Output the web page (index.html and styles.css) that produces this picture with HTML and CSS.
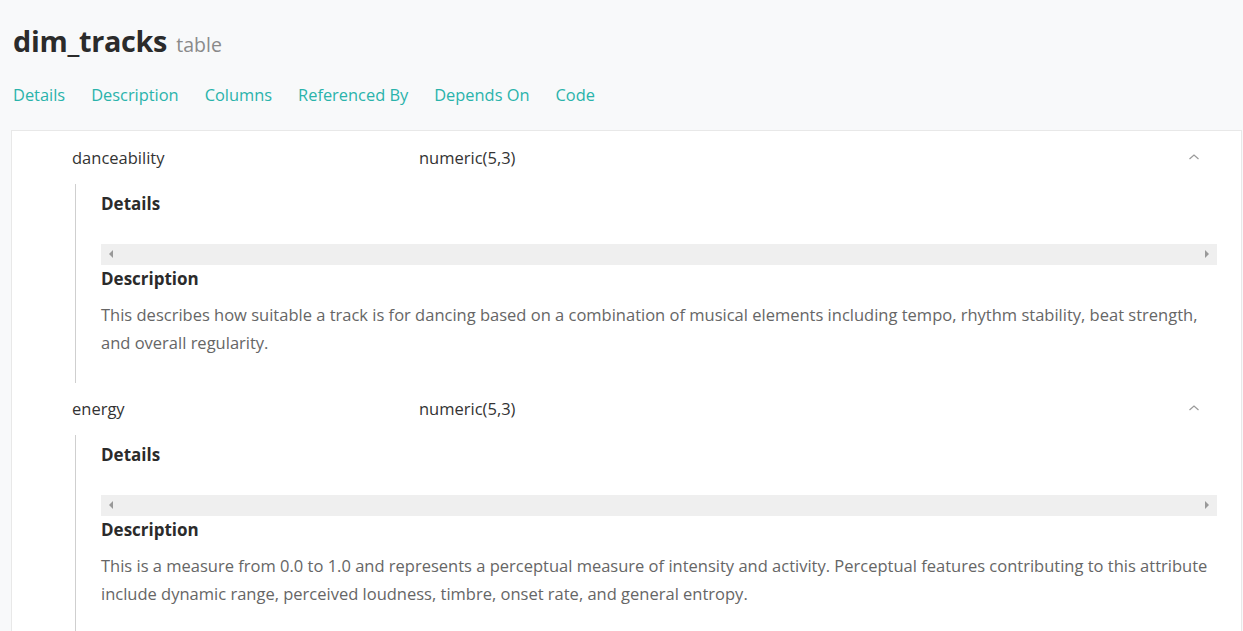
FILE: index.html
```html
<!DOCTYPE html>
<html>
<head>
<meta charset="utf-8">
<link rel="stylesheet" href="styles.css">
</head>
<body>
<div class="page">
  <h1 class="title">dim_tracks <span class="kind">table</span></h1>
  <nav class="tabs">
    <a>Details</a><a>Description</a><a>Columns</a><a>Referenced By</a><a>Depends On</a><a>Code</a>
  </nav>
  <div class="panel">
    <div class="col">
      <div class="col-head">
        <span class="col-name">danceability</span>
        <span class="col-type">numeric(5,3)</span>
        <svg class="chev" width="12" height="8" viewBox="0 0 12 8"><path d="M1.5 6 L6 2 L10.5 6" fill="none" stroke="#9a9a9a" stroke-width="1.2"/></svg>
      </div>
      <div class="col-body">
        <h3 class="sub">Details</h3>
        <div class="scroll"><span class="arr l"></span><span class="arr r"></span></div>
        <h3 class="sub">Description</h3>
        <p class="desc">This describes how suitable a track is for dancing based on a combination of musical elements including tempo, rhythm stability, beat strength, and overall regularity.</p>
      </div>
    </div>
    <div class="col">
      <div class="col-head">
        <span class="col-name">energy</span>
        <span class="col-type">numeric(5,3)</span>
        <svg class="chev" width="12" height="8" viewBox="0 0 12 8"><path d="M1.5 6 L6 2 L10.5 6" fill="none" stroke="#9a9a9a" stroke-width="1.2"/></svg>
      </div>
      <div class="col-body">
        <h3 class="sub">Details</h3>
        <div class="scroll"><span class="arr l"></span><span class="arr r"></span></div>
        <h3 class="sub">Description</h3>
        <p class="desc">This is a measure from 0.0 to 1.0 and represents a perceptual measure of intensity and activity. Perceptual features contributing to this attribute include dynamic range, perceived loudness, timbre, onset rate, and general entropy.</p>
      </div>
    </div>
  </div>
</div>
</body>
</html>
```
FILE: styles.css
```css
html, body { margin: 0; padding: 0; }
body {
  background: #f8f9fa;
  font-family: "Open Sans", "Noto Sans", sans-serif;
  color: #333;
  overflow: hidden;
}
.page { padding: 22px 0 0 11px; }
.title {
  margin: 0 0 0 2px;
  font-size: 28.8px;
  font-weight: 700;
  line-height: 38px;
  color: #2b2b2b;
  letter-spacing: -0.3px;
}
.kind { font-size: 19.5px; font-weight: 400; color: #8a8a8a; letter-spacing: 0; margin-left: 2px; }
.tabs { display: flex; gap: 26px; margin: 18px 0 0 2px; height: 48px; align-items: flex-start; }
.tabs a { font-size: 16.4px; color: #2ab3ab; line-height: 26px; }
.panel {
  background: #fff;
  border: 1px solid #e8e8e8;
  margin-right: 1px;
  padding-top: 13px;
  min-height: 600px;
}
.col-head {
  display: flex;
  align-items: center;
  height: 26px;
  padding-left: 60px;
  font-size: 16.5px;
  color: #333;
}
.col-name { width: 347px; }
.col-type { flex: 1; }
.chev { margin-right: 41px; }
.col-body {
  margin: 14px 0 0 63px;
  border-left: 1px solid #cfcfcf;
  padding: 6px 24px 26px 25px;
}
.sub { margin: 0; font-size: 17px; font-weight: 700; line-height: 28px; color: #2b2b2b; }
.scroll {
  margin-top: 26px;
  height: 21px;
  background: #efefef;
  position: relative;
}
.arr { position: absolute; top: 6px; width: 0; height: 0; border-top: 4.5px solid transparent; border-bottom: 4.5px solid transparent; }
.arr.l { left: 8px; border-right: 4.5px solid #999; }
.arr.r { right: 8px; border-left: 4.5px solid #999; }
.desc { margin: 8px 0 0; font-size: 16.5px; line-height: 28px; color: #666; }
.col + .col { margin-top: 12px; }
```
